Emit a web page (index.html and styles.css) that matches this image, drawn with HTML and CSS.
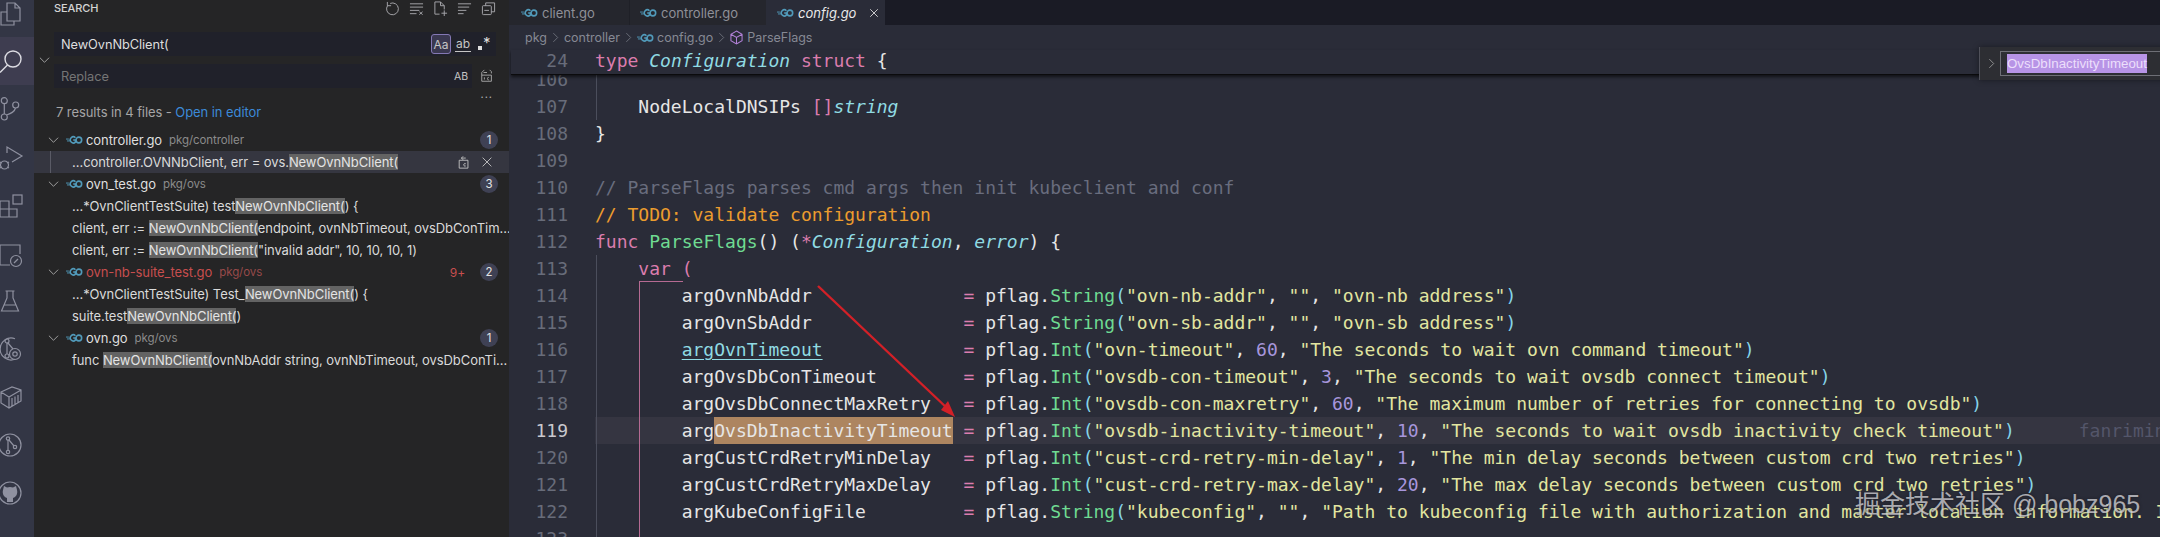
FILE: index.html
```html
<!DOCTYPE html>
<html lang="en">
<head>
<meta charset="utf-8">
<title>config.go</title>
<link rel="stylesheet" href="styles.css">
</head>
<body>
<svg class="defs" width="0" height="0" aria-hidden="true">
  <symbol id="go" viewBox="0 0 18 10">
    <path d="M0 4h3M1 6h3" stroke="#519aba" stroke-width="1" fill="none"/>
    <path d="M10 2.600A3.200 3.200 0 1 0 10 7.200V5H7.600" stroke="#519aba" stroke-width="1.700" fill="none"/>
    <circle cx="13.600" cy="5" r="3" stroke="#519aba" stroke-width="1.700" fill="none"/>
  </symbol>
</svg>
<div class="app">
  <nav class="activity">
    <div class="act">
      <svg viewBox="0 0 34 48"><path d="M7 14h8l5 5v13H7zM15 14v5h5M7 23H1v13h13v-4"/></svg>
    </div>
    <div class="act act-on">
      <svg viewBox="0 0 34 48"><circle cx="13" cy="22" r="8"/><path d="M7.500 28L0 35.500"/></svg>
    </div>
    <div class="act">
      <svg viewBox="0 0 34 48"><circle cx="4.300" cy="15.700" r="3"/><circle cx="4.300" cy="32" r="3"/><circle cx="15.700" cy="20" r="3"/><path d="M4.300 18.700v10.300M6.500 30c5-1.500 8-3 9-7"/></svg>
    </div>
    <div class="act">
      <svg viewBox="0 0 34 48"><path d="M7 20v-6l15 9-10 6"/><circle cx="4.500" cy="32" r="4"/><path d="M0 29l2 1M9 29l-2 1M0 35l2-1M9 35l-2-1"/></svg>
    </div>
    <div class="act">
      <svg viewBox="0 0 34 48"><rect x="13" y="14" width="9" height="9"/><path d="M0 20h9v8h8v8H0zM0 28h9v8"/></svg>
    </div>
    <div class="act">
      <svg viewBox="0 0 34 48"><path d="M0 16h20v9M10 36H0M0 16v20"/><circle cx="16" cy="32" r="5.500"/><path d="M14 34l4-4"/></svg>
    </div>
    <div class="act">
      <svg viewBox="0 0 34 48"><path d="M5.500 14h9M7 14v7L1.500 34h17L13 21v-7M4 28h12"/></svg>
    </div>
    <div class="act">
      <svg viewBox="0 0 34 48"><path d="M15 13.700A11 11 0 1 0 15 34.300"/><circle cx="7" cy="16" r="2"/><circle cx="7" cy="31" r="2"/><path d="M7 18v11M8 18l5 6"/><circle cx="15" cy="29" r="5.500"/><circle cx="15" cy="29" r="2.200"/></svg>
    </div>
    <div class="act">
      <svg viewBox="0 0 34 48"><path d="M1 19l11-5 9 3v11l-12 7-8-5zM1 19l8 5v11M9 24l12-7M12 25v8M15 23.500v8M18 22v8"/></svg>
    </div>
    <div class="act">
      <svg viewBox="0 0 34 48"><circle cx="10" cy="24" r="11"/><circle cx="8" cy="17.500" r="1.700"/><circle cx="8" cy="31" r="1.700"/><circle cx="15" cy="26" r="1.700"/><path d="M8 19v10M9 19l5 6"/></svg>
    </div>
    <div class="act">
      <svg viewBox="0 0 34 48"><circle cx="10" cy="24" r="11"/><path class="solid" d="M3 21l1-4 3 1.500a10 10 0 0 1 6 0L16 17l1 4c1 4-1 7-4 8v4H7v-4c-3-1-5-4-4-8z"/></svg>
    </div>
  </nav>

  <aside class="side">
    <header class="side-head">
      <span class="side-title">SEARCH</span>
      <div class="head-icons">
        <svg viewBox="0 0 16 16"><path d="M5.500 2.600A6.300 6.300 0 1 1 2.800 4.800M2.500 1v4h4"/></svg>
        <svg viewBox="0 0 16 16"><path d="M1 3h14M1 6.500h14M1 10h10M1 13.500h7M11 11.500l3.500 3M14.500 11.500l-3.500 3"/></svg>
        <svg viewBox="0 0 16 16"><path d="M7 14H2V1h6l4 4v4M8 1v4h4M12 10v6M9 13h6"/></svg>
        <svg viewBox="0 0 16 16"><path d="M1 3h14M1 6.500h12M1 10h9M1 13.500h6"/></svg>
        <svg viewBox="0 0 16 16"><rect x="1.500" y="5" width="9.500" height="9.500" rx="1"/><path d="M5 5V2h9.500v9.500H11M3.500 10h5"/></svg>
      </div>
    </header>

    <form class="search-form">
      <span class="toggle"><svg class="chev" viewBox="0 0 12 8"><path d="M1 1.500l5 5 5-5"/></svg></span>
      <div class="fields">
        <div class="field field-find">
          <span class="field-text">NewOvnNbClient(</span>
          <span class="opt opt-on">Aa</span>
          <span class="opt opt-ab">ab</span>
          <span class="opt-re"><i class="re-dot"></i><b>*</b></span>
        </div>
        <div class="replace-row">
          <div class="field field-rep">
            <span class="field-text ph">Replace</span>
            <span class="opt-case">AB</span>
          </div>
          <svg class="rep-all" viewBox="0 0 16 16"><path d="M2 7V4l3-3M2 7h11v7H2V7M4 4h4M11 1l2 2v2"/><path d="M5 9.500v2.500M10 9.500a1.500 1.500 0 1 0 0 3"/></svg>
        </div>
      </div>
    </form>
    <div class="dots">···</div>
    <p class="summary">7 results in 4 files - <a class="link">Open in editor</a></p>

    <ul class="results">
      <li class="row file">
        <svg class="chev" viewBox="0 0 12 8"><path d="M1 1.500l5 5 5-5"/></svg>
        <svg class="goi"><use href="#go"/></svg>
        <span class="fname">controller.go</span><span class="fpath">pkg/controller</span>
        <span class="badge">1</span>
      </li>
      <li class="row hit hit-sel">
        <span>…controller.OVNNbClient, err = ovs.<mark>NewOvnNbClient(</mark></span>
        <span class="hit-actions">
          <svg viewBox="0 0 16 16"><path d="M2.500 6v9h10V6H2.500M5 3.500h5M5 3.500l2-2M5 3.500l2 2M10 10a1.500 1.500 0 1 0 0 2.500"/></svg>
          <svg viewBox="0 0 16 16"><path d="M3 3l10 10M13 3L3 13"/></svg>
        </span>
      </li>
      <li class="row file">
        <svg class="chev" viewBox="0 0 12 8"><path d="M1 1.500l5 5 5-5"/></svg>
        <svg class="goi"><use href="#go"/></svg>
        <span class="fname">ovn_test.go</span><span class="fpath">pkg/ovs</span>
        <span class="badge">3</span>
      </li>
      <li class="row hit"><span>…*OvnClientTestSuite) test<mark>NewOvnNbClient(</mark>) {</span></li>
      <li class="row hit"><span>client, err := <mark>NewOvnNbClient(</mark>endpoint, ovnNbTimeout, ovsDbConTim…</span></li>
      <li class="row hit"><span>client, err := <mark>NewOvnNbClient(</mark>"invalid addr", 10, 10, 10, 1)</span></li>
      <li class="row file file-err">
        <svg class="chev" viewBox="0 0 12 8"><path d="M1 1.500l5 5 5-5"/></svg>
        <svg class="goi"><use href="#go"/></svg>
        <span class="fname">ovn-nb-suite_test.go</span><span class="fpath">pkg/ovs</span>
        <span class="errs">9+</span>
        <span class="badge">2</span>
      </li>
      <li class="row hit"><span>…*OvnClientTestSuite) Test_<mark>NewOvnNbClient(</mark>) {</span></li>
      <li class="row hit"><span>suite.test<mark>NewOvnNbClient(</mark>)</span></li>
      <li class="row file">
        <svg class="chev" viewBox="0 0 12 8"><path d="M1 1.500l5 5 5-5"/></svg>
        <svg class="goi"><use href="#go"/></svg>
        <span class="fname">ovn.go</span><span class="fpath">pkg/ovs</span>
        <span class="badge">1</span>
      </li>
      <li class="row hit"><span>func <mark>NewOvnNbClient(</mark>ovnNbAddr string, ovnNbTimeout, ovsDbConTi…</span></li>
    </ul>
  </aside>

  <main class="editor">
    <div class="tabs">
      <div class="tab tab-client"><svg class="goi"><use href="#go"/></svg><span>client.go</span></div>
      <div class="tab tab-ctrl"><svg class="goi"><use href="#go"/></svg><span>controller.go</span></div>
      <div class="tab tab-on"><svg class="goi"><use href="#go"/></svg><span>config.go</span>
        <svg class="tab-x" viewBox="0 0 12 12"><path d="M1.500 1.500l9 9M10.500 1.500l-9 9"/></svg></div>
    </div>
    <div class="crumbs">
      <span>pkg</span><svg class="sep" viewBox="0 0 8 12"><path d="M1.500 1l5 5-5 5"/></svg>
      <span>controller</span><svg class="sep" viewBox="0 0 8 12"><path d="M1.500 1l5 5-5 5"/></svg>
      <svg class="goi"><use href="#go"/></svg><span>config.go</span><svg class="sep" viewBox="0 0 8 12"><path d="M1.500 1l5 5-5 5"/></svg>
      <svg class="cube" viewBox="0 0 14 16"><path d="M7 1l6 3.500v7L7 15l-6-3.500v-7zM1 4.500L7 8l6-3.500M7 8v7"/></svg><span>ParseFlags</span>
    </div>
    <div class="sticky">
      <span class="no">24</span><span class="src"><span class="k">type</span> <span class="t">Configuration</span> <span class="k">struct</span> {</span>
    </div>
    <div class="code">
      <div class="line"><span class="no">106</span><span class="src"></span></div>
      <div class="line"><span class="no">107</span><span class="src">    NodeLocalDNSIPs <span class="k">[]</span><span class="t">string</span></span></div>
      <div class="line"><span class="no">108</span><span class="src">}</span></div>
      <div class="line"><span class="no">109</span><span class="src"></span></div>
      <div class="line"><span class="no">110</span><span class="src"><span class="c">// ParseFlags parses cmd args then init kubeclient and conf</span></span></div>
      <div class="line"><span class="no">111</span><span class="src"><span class="todo">// TODO: validate configuration</span></span></div>
      <div class="line"><span class="no">112</span><span class="src"><span class="k">func</span> <span class="f">ParseFlags</span>() (<span class="k">*</span><span class="t">Configuration</span>, <span class="t">error</span>) {</span></div>
      <div class="line"><span class="no">113</span><span class="src">    <span class="k">var (</span></span></div>
      <div class="line"><span class="no">114</span><span class="src"><span class="name">argOvnNbAddr</span><span class="k">=</span> pflag.<span class="f">String</span><span class="p">(</span><span class="s">"ovn-nb-addr"</span>, <span class="s">""</span>, <span class="s">"ovn-nb address"</span><span class="p">)</span></span></div>
      <div class="line"><span class="no">115</span><span class="src"><span class="name">argOvnSbAddr</span><span class="k">=</span> pflag.<span class="f">String</span><span class="p">(</span><span class="s">"ovn-sb-addr"</span>, <span class="s">""</span>, <span class="s">"ovn-sb address"</span><span class="p">)</span></span></div>
      <div class="line"><span class="no">116</span><span class="src"><span class="name"><span class="linked">argOvnTimeout</span></span><span class="k">=</span> pflag.<span class="f">Int</span><span class="p">(</span><span class="s">"ovn-timeout"</span>, <span class="n">60</span>, <span class="s">"The seconds to wait ovn command timeout"</span><span class="p">)</span></span></div>
      <div class="line"><span class="no">117</span><span class="src"><span class="name">argOvsDbConTimeout</span><span class="k">=</span> pflag.<span class="f">Int</span><span class="p">(</span><span class="s">"ovsdb-con-timeout"</span>, <span class="n">3</span>, <span class="s">"The seconds to wait ovsdb connect timeout"</span><span class="p">)</span></span></div>
      <div class="line"><span class="no">118</span><span class="src"><span class="name">argOvsDbConnectMaxRetry</span><span class="k">=</span> pflag.<span class="f">Int</span><span class="p">(</span><span class="s">"ovsdb-con-maxretry"</span>, <span class="n">60</span>, <span class="s">"The maximum number of retries for connecting to ovsdb"</span><span class="p">)</span></span></div>
      <div class="line line-on"><span class="no">119</span><span class="src"><span class="name">arg<span class="sel">OvsDbInactivityTimeout</span></span><span class="k">=</span> pflag.<span class="f">Int</span><span class="p">(</span><span class="s">"ovsdb-inactivity-timeout"</span>, <span class="n">10</span>, <span class="s">"The seconds to wait ovsdb inactivity check timeout"</span><span class="p">)</span><span class="blame">fanrimin, 2 years ago</span></span></div>
      <div class="line"><span class="no">120</span><span class="src"><span class="name">argCustCrdRetryMinDelay</span><span class="k">=</span> pflag.<span class="f">Int</span><span class="p">(</span><span class="s">"cust-crd-retry-min-delay"</span>, <span class="n">1</span>, <span class="s">"The min delay seconds between custom crd two retries"</span><span class="p">)</span></span></div>
      <div class="line"><span class="no">121</span><span class="src"><span class="name">argCustCrdRetryMaxDelay</span><span class="k">=</span> pflag.<span class="f">Int</span><span class="p">(</span><span class="s">"cust-crd-retry-max-delay"</span>, <span class="n">20</span>, <span class="s">"The max delay seconds between custom crd two retries"</span><span class="p">)</span></span></div>
      <div class="line"><span class="no">122</span><span class="src"><span class="name">argKubeConfigFile</span><span class="k">=</span> pflag.<span class="f">String</span><span class="p">(</span><span class="s">"kubeconfig"</span>, <span class="s">""</span>, <span class="s">"Path to kubeconfig file with authorization and master location information. If not set use the inCluster token."</span><span class="p">)</span></span></div>
      <div class="line"><span class="no">123</span><span class="src"></span></div>
      <i class="guide guide-a"></i>
      <i class="guide guide-b"></i>
      <i class="guide guide-pink"></i>
    </div>

    <div class="rename">
      <svg class="rename-chev" viewBox="0 0 8 12"><path d="M1.500 1l5 5-5 5"/></svg>
      <div class="rename-box"><span class="rename-sel">OvsDbInactivityTimeout</span></div>
    </div>

    <svg class="arrow" viewBox="0 0 140 134" width="140" height="134">
      <path d="M1 1L131 124" stroke="#d32027" stroke-width="2.400" fill="none"/>
      <path d="M138 132L124 125L131 116Z" fill="#d32027"/>
    </svg>
    <div class="mark-water">掘金技术社区 @ bobz965</div>
  </main>
</div>
</body>
</html>
```
FILE: styles.css
```css
* { box-sizing: border-box; }
html, body { margin: 0; padding: 0; height: 100%; background: #252526; }
body { overflow: hidden; font-family: "Inter", "Liberation Sans", sans-serif; }
.defs { position: absolute; }
.app { display: flex; width: 2160px; height: 537px; overflow: hidden; }

/* activity bar */
.activity { flex: none; width: 34px; margin-top: -11px; background: #333645; display: flex; flex-direction: column; height: 548px; }
.act { flex: none; width: 34px; height: 48px; }
.act-on { background: #3e3d50; }
.act svg { display: block; width: 34px; height: 48px; fill: none; stroke: #8f91a0; stroke-width: 1.2; }
.act-on svg { stroke: #dcdce2; stroke-width: 1.4; }
.act .solid { fill: #8f91a0; stroke: none; }

/* sidebar */
.side { flex: none; width: 475px; background: #252526; color: #d8d8d8; font-size: 13px; letter-spacing: -0.08px; }
.side-head { display: flex; align-items: center; justify-content: space-between; height: 16px; padding: 0 13px 0 20px; }
.side-title { font-size: 11px; font-weight: 500; color: #d4d4d4; }
.head-icons { display: flex; gap: 8px; }
.head-icons svg { width: 15px; height: 15px; fill: none; stroke: #a9a9ad; stroke-width: 1; margin-left: 1px; }
.chev { width: 11px; height: 8px; fill: none; stroke: #a8a8a8; stroke-width: 1; flex: none; }

.search-form { display: flex; margin-top: 16px; }
.toggle { flex: none; width: 20px; display: flex; align-items: center; justify-content: center; }
.fields { flex: none; width: 442px; display: flex; flex-direction: column; gap: 8px; }
.field { height: 24px; background: #20212a; display: flex; align-items: center; padding-left: 7px; }
.field-text { flex: 1; font-size: 12.8px; color: #dedede; }
.ph { color: #757575; }
.opt { display: flex; align-items: center; justify-content: center; font-size: 12px; color: #c5c5c5; }
.opt-on { width: 20px; height: 20px; border: 1px solid #8478b4; border-radius: 3px; background: #3a3850; margin-right: 4px; }
.opt-ab { width: 16px; height: 16px; margin-right: 6px; border-bottom: 1px solid #c5c5c5; line-height: 14px; }
.opt-re { position: relative; width: 18px; height: 20px; margin-right: 1px; color: #dedede; }
.opt-re b { position: absolute; left: 6px; top: 0; font-size: 15px; font-weight: 400; line-height: 18px; }
.re-dot { position: absolute; left: 1px; top: 12px; width: 4px; height: 4px; background: #dedede; }
.replace-row { display: flex; align-items: center; }
.field-rep { width: 418px; }
.opt-case { font-size: 10.5px; color: #c5c5c5; margin-right: 4px; }
.rep-all { width: 14px; height: 14px; margin-left: 8px; fill: none; stroke: #b0b0b0; stroke-width: 1; }
.dots { height: 14px; padding-right: 16px; text-align: right; font-size: 11px; line-height: 18px; color: #b0b0b0; letter-spacing: 1px; }
.summary { margin: 0 0 7px; height: 20px; line-height: 20px; padding-left: 22px; color: #a6a6a6; font-size: 13px; }
.link { color: #3c8ad8; }

.results { list-style: none; margin: 0; padding: 0; }
.row { display: flex; align-items: center; height: 22px; padding-right: 11px; white-space: nowrap; }
.file { padding-left: 14px; }
.file .chev { margin-right: 7px; }
.goi { flex: none; width: 17px; height: 10px; }
.fname { margin-left: 3px; font-size: 13px; color: #dfdfdf; }
.fpath { margin-left: 7px; font-size: 11.5px; color: #8b8b8b; }
.badge { flex: none; margin-left: auto; min-width: 18px; height: 18px; border-radius: 9px; background: #3f4154; color: #e4e4e4; font-size: 11.5px; line-height: 18px; text-align: center; }
.file-err .fname { color: #c74e4e; }
.file-err .fpath { color: #984a4a; }
.errs { margin-left: auto; margin-right: 15px; color: #c74e4e; font-size: 12px; }
.file-err .badge { margin-left: 0; }
.hit { padding-left: 38px; font-size: 13px; color: #dadada; padding-right: 0; }
.hit mark { background: #636363; color: #e4e4e4; }
.hit-sel { background: #353640; position: relative; }
.hit-sel::before { content: ""; position: absolute; left: 16px; top: 0; bottom: 0; width: 1px; background: #5a5b66; }
.hit-actions { margin-left: auto; display: flex; gap: 9px; padding-right: 15px; }
.hit-actions svg { width: 14px; height: 14px; fill: none; stroke: #c8c8c8; stroke-width: 1; }

/* editor */
.editor { position: relative; flex: 1; min-width: 0; background: #2a2c38; display: flex; flex-direction: column; overflow: hidden; }
.tabs { flex: none; display: flex; height: 25px; background: #1a1b25; }
.tab { display: flex; align-items: center; height: 25px; background: #25262d; color: #8f9098; font-size: 13px; padding-left: 12px; }
.tab .goi { margin-right: 4px; }
.tab-client { width: 120px; }
.tab-ctrl { width: 137px; border-left: 1px solid #1f2027; padding-left: 10px; }
.tab-on { width: 119px; background: #2a2c38; color: #e8e8e8; font-style: italic; padding-left: 11px; }
.tab-x { width: 10px; height: 10px; margin-left: 13px; fill: none; stroke: #d8d8d8; stroke-width: 1.100; }

.crumbs { flex: none; display: flex; align-items: center; height: 25px; padding-left: 16px; color: #868994; font-size: 12.5px; }
.sep { width: 7px; height: 11px; margin: 0 5px; fill: none; stroke: #70737e; stroke-width: 1; }
.crumbs .goi { margin-right: 3px; }
.cube { width: 13px; height: 15px; margin-right: 4px; fill: none; stroke: #b180d7; stroke-width: 1.100; }

.sticky, .line { display: flex; font-family: "DejaVu Sans Mono", "Liberation Mono", monospace; font-size: 18px; white-space: pre; color: #e6e6e6; }
.sticky { flex: none; height: 25px; line-height: 22px; border-bottom: 1px solid #0b0b0d; background: #2a2c38; box-shadow: 0 2px 3px #0009; position: relative; z-index: 2; margin-left: 2px; }
.sticky .no { width: 57px; }
.code { position: relative; flex: 1; min-height: 0; overflow: hidden; }
.line { height: 27px; line-height: 27px; }
.line:first-child { margin-top: -9px; }
.no { flex: none; width: 59px; text-align: right; color: #686c7a; }
.src { flex: 1; min-width: 0; margin-left: 27px; height: 100%; }
.line-on .no { color: #c9c9cf; }
.line-on .src { background: #353541; }

.k { color: #db7dae; }
.t { color: #90dbe3; font-style: italic; }
.f { color: #6fdb92; }
.s { color: #e2e6a0; }
.n { color: #a796dc; }
.p { color: #86d4e8; }
.c { color: #696d7e; }
.todo { color: #ec9c2e; }
.name { display: inline-block; width: 34ch; padding-left: 8ch; }
.linked { color: #90dbe3; text-decoration: underline; text-underline-offset: 3px; }
.sel { display: inline-block; background: #ad8560; line-height: 27px; height: 27px; width: 22ch; }
.blame { margin-left: 64px; color: #54566a; }

.guide { position: absolute; width: 1px; }
.guide-a { left: 87px; top: 0; height: 45px; background: #4b4e5c; }
.guide-b { left: 87px; top: 180px; bottom: 0; background: #4b4e5c; }
.guide-pink { left: 130px; top: 206px; bottom: 0; width: 44px; border-left: 1px solid #b56a92; border-top: 1px solid #b56a92; }

.rename { position: absolute; z-index: 3; left: 1470px; top: 47px; right: -20px; height: 33px; background: #2d2e33; border-left: 1px solid #50515a; box-shadow: 0 0 6px #0006; display: flex; align-items: center; padding-left: 8px; }
.rename-chev { width: 7px; height: 11px; fill: none; stroke: #9a9a9a; stroke-width: 1; flex: none; }
.rename-box { flex: 1; height: 25px; margin-left: 5px; border: 1px solid #6e6f76; display: flex; align-items: center; padding-left: 6px; }
.rename-sel { background: #b794e6; color: #ecdffb; font-family: "Liberation Sans", sans-serif; font-size: 13.3px; line-height: 19px; white-space: nowrap; }

.arrow { position: absolute; z-index: 4; left: 308px; top: 285px; }
.mark-water { position: absolute; z-index: 5; left: 1346px; top: 488px; font-size: 25px; line-height: 32px; color: rgba(225, 225, 230, 0.72); text-shadow: 0 0 3px rgba(20, 20, 25, 0.7); white-space: nowrap; font-family: "Liberation Sans", "Noto Sans CJK SC", sans-serif; }
```
